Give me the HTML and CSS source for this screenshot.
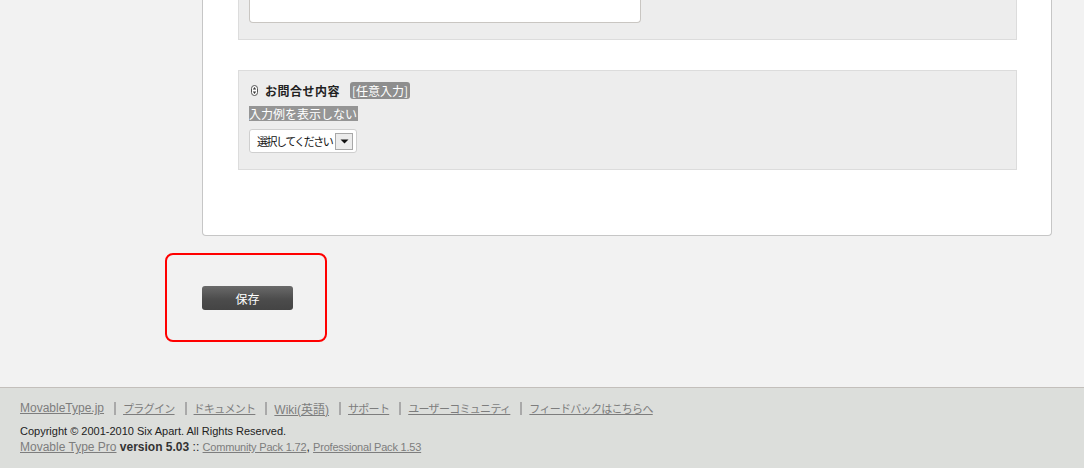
FILE: index.html
```html
<!DOCTYPE html>
<html lang="ja">
<head>
    <meta charset="UTF-8">
    <title>お問合せフォーム設定</title>
    <link rel="stylesheet" href="styles.css">
</head>
<body>

    <div class="panel">
        <div class="field field-first">
            <div class="textarea"></div>
        </div>

        <div class="field">
            <div class="field-label">
                <svg class="grip" width="7" height="11" viewBox="0 0 7 11">
                    <rect x="0.5" y="0.5" width="6" height="10" rx="3" fill="#fff" stroke="#555"/>
                    <path d="M3.5 2 L5.2 4.5 H1.8 Z M3.5 9 L5.2 6.5 H1.8 Z" fill="#333"/>
                </svg>
                <span class="label-text">お問合せ内容</span>
                <span class="badge">[任意入力]</span>
            </div>
            <div class="hint-row"><span class="hint">入力例を表示しない</span></div>
            <div class="select">
                <span class="select-text">選択してください</span>
                <span class="select-arrow">
                    <svg width="9" height="5" viewBox="0 0 9 5"><path d="M0.5 0.5 H8.5 L4.5 4.5 Z" fill="#111"/></svg>
                </span>
            </div>
        </div>
    </div>

    <div class="actions">
        <div class="highlight">
            <button class="save-btn">保存</button>
        </div>
    </div>

    <div class="footer">
        <div class="footer-links">
            <a href="#" class="latin">MovableType.jp</a><span class="sep"></span>
            <a href="#">プラグイン</a><span class="sep"></span>
            <a href="#">ドキュメント</a><span class="sep"></span>
            <a href="#" class="latin">Wiki(英語)</a><span class="sep"></span>
            <a href="#">サポート</a><span class="sep"></span>
            <a href="#">ユーザーコミュニティ</a><span class="sep"></span>
            <a href="#">フィードバックはこちらへ</a>
        </div>
        <div class="copyright">Copyright © 2001-2010 Six Apart. All Rights Reserved.</div>
        <div class="version">
            <a href="#">Movable Type Pro</a> <b>version 5.03</b> :: <a href="#" class="small">Community Pack 1.72</a>, <a href="#" class="small">Professional Pack 1.53</a>
        </div>
    </div>

</body>
</html>
```

FILE: styles.css
```css
* {
    margin: 0;
    padding: 0;
    box-sizing: border-box;
}

body {
    font-family: "Liberation Sans", "Noto Sans CJK JP", sans-serif;
    font-size: 12px;
    color: #333;
    background-color: #f2f2f2;
}

.panel {
    margin: 0 32px 0 202px;
    background-color: #fff;
    border: 1px solid #c6c6c6;
    border-top: none;
    border-radius: 0 0 4px 4px;
    padding: 0 34px 65px 35px;
}

.field {
    background-color: #ededed;
    border: 1px solid #dcdcdc;
    padding: 10px 10px 16px;
    margin-top: 30px;
}

.field-first {
    border-top: none;
    padding-top: 0;
    margin-top: 0;
}

.textarea {
    width: 392px;
    height: 23px;
    background-color: #fff;
    border: 1px solid #c9c6c2;
    border-top: none;
    border-radius: 0 0 4px 4px;
}

.field-label {
    display: flex;
    align-items: center;
    height: 18px;
    margin-bottom: 7px;
    font-family: "Noto Sans CJK JP", sans-serif;
}

.grip {
    margin: 0 7px 0 2px;
}

.label-text {
    font-weight: bold;
    font-size: 12px;
    color: #222;
    letter-spacing: 0.5px;
}

.badge {
    margin-left: 10px;
    height: 17px;
    line-height: 17px;
    padding: 0 2px;
    background-color: #8e8e8e;
    color: #fff;
    border-radius: 3px;
    font-size: 12px;
}

.hint-row {
    height: 15px;
    margin-bottom: 8px;
}

.hint {
    display: inline-block;
    height: 15px;
    line-height: 15px;
    background-color: #959595;
    color: #fff;
    font-family: "Noto Sans CJK JP", sans-serif;
    font-size: 12px;
    padding-right: 1px;
}

.select {
    display: inline-flex;
    align-items: center;
    width: 108px;
    height: 24px;
    background-color: #fff;
    border: 1px solid #cfcfcf;
    border-radius: 3px;
    padding: 0 3px 0 7px;
    font-family: "Noto Sans CJK JP", sans-serif;
    font-size: 11px;
    color: #111;
}

.select-text {
    flex: 1;
    letter-spacing: -1.5px;
    white-space: nowrap;
}

.select-arrow {
    display: flex;
    align-items: center;
    justify-content: center;
    width: 18px;
    height: 17px;
    background-color: #ececec;
    border: 1px solid #a8a8a8;
}

.actions {
    padding: 17px 0 45px 165px;
}

.highlight {
    width: 162px;
    height: 89px;
    border: 2px solid #ff0000;
    border-radius: 8px;
    padding: 31px 0 0 35px;
}

.save-btn {
    display: block;
    width: 91px;
    height: 24px;
    border: none;
    border-radius: 3px;
    background: linear-gradient(#6a6a6a, #4c4c4c 55%, #444);
    color: #fff;
    font-family: "Noto Sans CJK JP", sans-serif;
    font-size: 12px;
    cursor: pointer;
}

.footer {
    background-color: #dcdedb;
    border-top: 1px solid #c3bfbb;
    padding: 11px 20px 20px;
    height: 82px;
}

.footer a {
    color: #7d7d7d;
    text-decoration: underline;
}

.footer-links {
    display: flex;
    align-items: center;
    height: 18px;
    font-family: "Liberation Sans", "Noto Sans CJK JP", sans-serif;
    font-size: 11px;
    letter-spacing: -0.7px;
    margin-bottom: 7px;
}

.footer-links .latin {
    font-size: 12px;
    letter-spacing: 0;
}

.sep {
    display: inline-block;
    width: 2px;
    height: 13px;
    background-color: #a9a9a9;
    margin: 0 7px 0 10px;
}

.copyright {
    font-size: 11px;
    line-height: 15px;
    color: #222;
}

.version {
    font-size: 12px;
    line-height: 16px;
    color: #222;
}

.version b {
    color: #333;
}

.footer .small {
    font-size: 11px;
    letter-spacing: -0.2px;
}
```
